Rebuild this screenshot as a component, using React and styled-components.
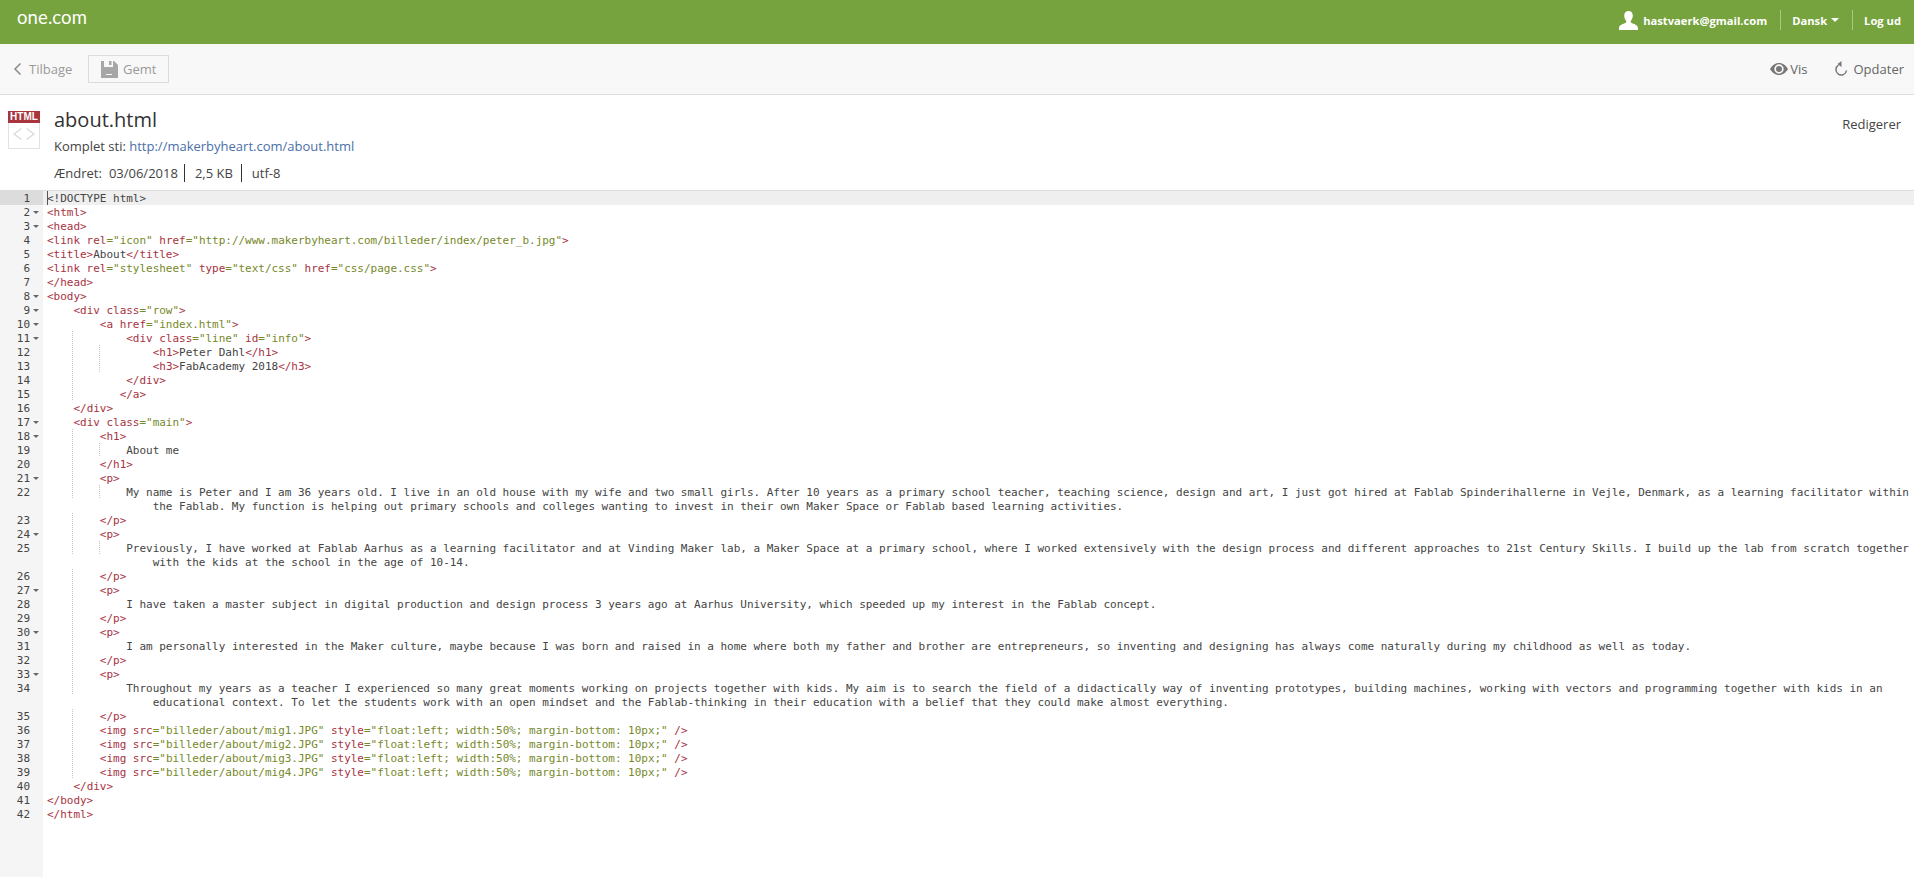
import React from "react";
import styled, { createGlobalStyle } from "styled-components";

const GlobalStyle = createGlobalStyle`
  html, body {
    margin: 0;
    padding: 0;
    height: 100%;
    overflow: hidden;
    background: #fff;
    font-family: "Open Sans", "Liberation Sans", sans-serif;
  }
`;

const TopBar = styled.header`
  height: 44px;
  background: #76a33e;
  display: flex;
  align-items: center;
  justify-content: space-between;
  padding: 0 0 0 17px;
  color: #fff;
`;

const Logo = styled.div`
  font-family: Lato, sans-serif;
  font-size: 18.5px;
  line-height: 38px;
  margin-top: -10px;
  letter-spacing: 0.1px;
`;

const UserArea = styled.div`
  display: flex;
  align-items: center;
  font-size: 11.2px;
  font-weight: 700;
  margin-top: -4px;
`;

const UserItem = styled.div`
  display: flex;
  align-items: center;
  height: 20px;
  gap: ${(p) => p.$gap || 0}px;
  padding: 0 13px 0 11px;
  border-left: ${(p) => (p.$divider ? "1px solid #a9c882" : "none")};
`;

const Caret = styled.span`
  width: 0;
  height: 0;
  margin-left: 4px;
  border-left: 4px solid transparent;
  border-right: 4px solid transparent;
  border-top: 4px solid #fff;
`;

const Toolbar = styled.div`
  height: 50px;
  background: #f8f8f8;
  border-bottom: 1px solid #dedede;
  display: flex;
  align-items: center;
  justify-content: space-between;
  padding: 0 10px 0 13px;
  font-size: 13px;
  color: #777;
`;

const ToolGroup = styled.div`
  display: flex;
  align-items: center;
  gap: ${(p) => p.$gap}px;
`;

const ToolLink = styled.span`
  display: flex;
  align-items: center;
  gap: ${(p) => p.$gap}px;
  color: ${(p) => p.$color || "#9a9a9a"};
`;

const SavedButton = styled.span`
  width: 79px;
  height: 26px;
  border: 1px solid #dcdcdc;
  display: flex;
  align-items: center;
  justify-content: center;
  gap: 5px;
  color: #9a9a9a;
`;

const FileHead = styled.div`
  height: 95px;
  display: flex;
  justify-content: space-between;
  padding: 16px 13px 0 8px;
  box-sizing: border-box;
  color: #444;
`;

const FileInfo = styled.div`
  display: flex;
  gap: 14px;
`;

const HtmlIcon = styled.div`
  width: 32px;
  height: 38px;
  border: 1px solid #e2e2e2;
  box-sizing: border-box;
  display: flex;
  flex-direction: column;
  align-items: center;
  gap: 4px;
`;

const HtmlBadge = styled.span`
  align-self: stretch;
  margin: -1px -1px 0;
  height: 12px;
  background: #a8343e;
  color: #fff;
  font-family: "Liberation Sans", sans-serif;
  font-size: 10px;
  font-weight: 700;
  line-height: 12px;
  text-align: center;
  overflow: hidden;
`;

const FileTitle = styled.h1`
  margin: -5px 0 0;
  font-size: 20px;
  font-weight: 400;
  line-height: 27px;
  color: #333;
`;

const PathLine = styled.div`
  font-size: 13px;
  line-height: 18px;
  margin-top: 4px;
`;

const PathLink = styled.a`
  color: #4a6fa8;
`;

const MetaLine = styled.div`
  display: flex;
  align-items: center;
  font-size: 13px;
  line-height: 18px;
  margin-top: 9px;
`;

const MetaLabel = styled.span`
  margin-right: 7px;
`;

const MetaItem = styled.span`
  padding: 0 ${(p) => (p.$divider ? "8px" : "6px")} 0 ${(p) => (p.$divider ? "10px" : "0")};
  border-left: ${(p) => (p.$divider ? "1px solid #333" : "none")};
`;

const EditorMode = styled.div`
  font-size: 13px;
  margin-top: 4px;
`;

const Editor = styled.div`
  border-top: 1px solid #dedede;
  display: flex;
  height: 686px;
  font-family: "DejaVu Sans Mono", monospace;
  font-size: 11px;
  line-height: 16px;
  letter-spacing: -0.02px;
`;

const Gutter = styled.div`
  width: 43px;
  flex: none;
  background: #f5f5f5;
  color: #444;
`;

const GutterCell = styled.div`
  height: ${(p) => p.$rows * 14}px;
  background: ${(p) => (p.$active ? "#dcdcdc" : "transparent")};
  padding-right: 13px;
  text-align: right;
  position: relative;
`;

const FoldMark = styled.span`
  position: absolute;
  left: 33px;
  top: 6px;
  border-left: 3px solid transparent;
  border-right: 3px solid transparent;
  border-top: 3px solid #666;
`;

const Code = styled.div`
  flex: 1;
  min-width: 0;
  padding-left: 4px;
  white-space: pre;
  color: #444;
`;

const CodeRow = styled.div`
  height: 14px;
  margin-left: ${(p) => (p.$active ? "-4px" : "0")};
  padding-left: ${(p) => (p.$active ? "4px" : "0")};
  background: ${(p) => (p.$active ? "#efefef" : "transparent")};
  position: relative;
`;

const Cursor = styled.span`
  position: absolute;
  left: 4px;
  top: 0;
  width: 1px;
  height: 14px;
  background: #555;
`;

const Guide = styled.span`
  display: inline-block;
  height: 14px;
  vertical-align: top;
  background: repeating-linear-gradient(to bottom, #c4c4c4 0 1px, transparent 1px 2px) right top / 1px 100% no-repeat;
`;

const Tag = styled.span`
  color: #a8323f;
`;

const Str = styled.span`
  color: #76892a;
`;

const Chevron = () => (
  <svg width="10" height="14" viewBox="0 0 10 14" fill="none" stroke="#8a8a8a" strokeWidth="1.5">
    <path d="M7.5 1.5 2 7l5.5 5.5" />
  </svg>
);

const SaveIcon = () => (
  <svg width="17" height="17" viewBox="0 0 17 17">
    <path fill="#a6a6a6" d="M0 0h3v6h9V0h1l4 4v13H0z" />
    <path fill="#a6a6a6" d="M8 0h2.5v4H8z" />
    <path fill="#f8f8f8" d="M5 13h6v1H5z" />
  </svg>
);

const EyeIcon = () => (
  <svg width="18" height="12" viewBox="0 0 18 12">
    <path
      fill="#777"
      fillRule="evenodd"
      d="M9 0c4 0 7 2.600 9 6-2 3.400-5 6-9 6s-7-2.600-9-6c2-3.400 5-6 9-6zm0 1.300A4.700 4.700 0 1 0 9 10.700 4.700 4.700 0 0 0 9 1.300zM9 3a3 3 0 1 1 0 6 3 3 0 0 1 0-6z"
    />
  </svg>
);

const RefreshIcon = () => (
  <svg width="14" height="16" viewBox="0 0 14 16" fill="none">
    <path stroke="#777" strokeWidth="1.5" d="M4.500 4.200A5.300 5.300 0 1 0 12.500 9.500" />
    <path fill="#777" d="M7.500 0v6L3.500 3z" />
  </svg>
);

const UserIcon = () => (
  <svg width="19" height="19" viewBox="0 0 19 19">
    <path
      fill="#fff"
      d="M9.500 0c2.700 0 4.300 2 4.300 4.800 0 2-.9 3.900-1.900 5-.4.500-.3 1.500.4 1.900 2.300 1.200 6.700 2.100 6.700 5.200V19H0v-2.100c0-3.100 4.400-4 6.700-5.200.7-.4.800-1.400.4-1.900-1-1.100-1.900-3-1.900-5C5.200 2 6.800 0 9.500 0z"
    />
  </svg>
);

const AngleIcon = () => (
  <svg width="24" height="14" viewBox="0 0 24 14" fill="none" stroke="#dcdcdc" strokeWidth="1.5">
    <path d="M9.500 1.500 2 7l7.500 5.500M14.500 1.500 22 7l-7.500 5.500" />
  </svg>
);

// text, guide count, has fold arrow, wrapped remainder
const lines = [
  ["<!DOCTYPE html>", 0, false],
  ["<html>", 0, true],
  ["<head>", 0, true],
  ['<link rel="icon" href="http://www.makerbyheart.com/billeder/index/peter_b.jpg">', 0, false],
  ["<title>About</title>", 0, false],
  ['<link rel="stylesheet" type="text/css" href="css/page.css">', 0, false],
  ["</head>", 0, false],
  ["<body>", 0, true],
  ['    <div class="row">', 0, true],
  ['        <a href="index.html">', 0, true],
  ['            <div class="line" id="info">', 1, true],
  ["                <h1>Peter Dahl</h1>", 2, false],
  ["                <h3>FabAcademy 2018</h3>", 2, false],
  ["            </div>", 1, false],
  ["           </a>", 1, false],
  ["    </div>", 0, false],
  ['    <div class="main">', 0, true],
  ["        <h1>", 1, true],
  ["            About me", 2, false],
  ["        </h1>", 1, false],
  ["        <p>", 1, true],
  [
    "            My name is Peter and I am 36 years old. I live in an old house with my wife and two small girls. After 10 years as a primary school teacher, teaching science, design and art, I just got hired at Fablab Spinderihallerne in Vejle, Denmark, as a learning facilitator within",
    2,
    false,
    "the Fablab. My function is helping out primary schools and colleges wanting to invest in their own Maker Space or Fablab based learning activities.",
  ],
  ["        </p>", 1, false],
  ["        <p>", 1, true],
  [
    "            Previously, I have worked at Fablab Aarhus as a learning facilitator and at Vinding Maker lab, a Maker Space at a primary school, where I worked extensively with the design process and different approaches to 21st Century Skills. I build up the lab from scratch together",
    2,
    false,
    "with the kids at the school in the age of 10-14.",
  ],
  ["        </p>", 1, false],
  ["        <p>", 1, true],
  [
    "            I have taken a master subject in digital production and design process 3 years ago at Aarhus University, which speeded up my interest in the Fablab concept.",
    1,
    false,
  ],
  ["        </p>", 1, false],
  ["        <p>", 1, true],
  [
    "            I am personally interested in the Maker culture, maybe because I was born and raised in a home where both my father and brother are entrepreneurs, so inventing and designing has always come naturally during my childhood as well as today.",
    1,
    false,
  ],
  ["        </p>", 1, false],
  ["        <p>", 1, true],
  [
    "            Throughout my years as a teacher I experienced so many great moments working on projects together with kids. My aim is to search the field of a didactically way of inventing prototypes, building machines, working with vectors and programming together with kids in an",
    1,
    false,
    "educational context. To let the students work with an open mindset and the Fablab-thinking in their education with a belief that they could make almost everything.",
  ],
  ["        </p>", 1, false],
  ['        <img src="billeder/about/mig1.JPG" style="float:left; width:50%; margin-bottom: 10px;" />', 1, false],
  ['        <img src="billeder/about/mig2.JPG" style="float:left; width:50%; margin-bottom: 10px;" />', 1, false],
  ['        <img src="billeder/about/mig3.JPG" style="float:left; width:50%; margin-bottom: 10px;" />', 1, false],
  ['        <img src="billeder/about/mig4.JPG" style="float:left; width:50%; margin-bottom: 10px;" />', 1, false],
  ["    </div>", 0, false],
  ["</body>", 0, false],
  ["</html>", 0, false],
];

// splits a piece of markup into tag, string and plain tokens
function highlight(text) {
  const parts = text.split(/(<[^>]*>)/).filter(Boolean);
  return parts.map((part, i) => {
    if (!part.startsWith("<")) return <span key={i}>{part}</span>;
    if (part.startsWith("<!")) return <span key={i}>{part}</span>;
    const bits = part.split(/("[^"]*"|=)/).filter(Boolean);
    return bits.map((bit, j) =>
      bit.startsWith('"') || bit === "=" ? (
        <Str key={`${i}-${j}`}>{bit}</Str>
      ) : (
        <Tag key={`${i}-${j}`}>{bit}</Tag>
      )
    );
  });
}

function CodeLine({ text, guides, active }) {
  const guideChars = guides * 4;
  return (
    <CodeRow $active={active}>
      {active && <Cursor />}
      {Array.from({ length: guides }).map((_, i) => (
        <Guide key={i}>{"    "}</Guide>
      ))}
      {highlight(text.slice(guideChars))}
    </CodeRow>
  );
}

export default function App() {
  return (
    <>
      <GlobalStyle />
      <TopBar>
        <Logo>one.com</Logo>
        <UserArea>
          <UserItem $gap={5}>
            <UserIcon />
            hastvaerk@gmail.com
          </UserItem>
          <UserItem $divider>
            Dansk
            <Caret />
          </UserItem>
          <UserItem $divider>Log ud</UserItem>
        </UserArea>
      </TopBar>
      <Toolbar>
        <ToolGroup $gap={16}>
          <ToolLink $gap={6}>
            <Chevron />
            Tilbage
          </ToolLink>
          <SavedButton>
            <SaveIcon />
            Gemt
          </SavedButton>
        </ToolGroup>
        <ToolGroup $gap={26}>
          <ToolLink $gap={2} $color="#666">
            <EyeIcon />
            Vis
          </ToolLink>
          <ToolLink $gap={6} $color="#666">
            <RefreshIcon />
            Opdater
          </ToolLink>
        </ToolGroup>
      </Toolbar>
      <FileHead>
        <FileInfo>
          <HtmlIcon>
            <HtmlBadge>HTML</HtmlBadge>
            <AngleIcon />
          </HtmlIcon>
          <div>
            <FileTitle>about.html</FileTitle>
            <PathLine>
              Komplet sti: <PathLink>http://makerbyheart.com/about.html</PathLink>
            </PathLine>
            <MetaLine>
              <MetaLabel>Ændret:</MetaLabel>
              <MetaItem>03/06/2018</MetaItem>
              <MetaItem $divider>2,5 KB</MetaItem>
              <MetaItem $divider>utf-8</MetaItem>
            </MetaLine>
          </div>
        </FileInfo>
        <EditorMode>Redigerer</EditorMode>
      </FileHead>
      <Editor>
        <Gutter>
          {lines.map(([, , fold, wrapped], i) => (
            <GutterCell key={i} $rows={wrapped ? 2 : 1} $active={i === 0}>
              {i + 1}
              {fold && <FoldMark />}
            </GutterCell>
          ))}
        </Gutter>
        <Code>
          {lines.map(([text, guides, , wrapped], i) => (
            <React.Fragment key={i}>
              <CodeLine text={text} guides={guides} active={i === 0} />
              {wrapped && <CodeRow>{"                " + wrapped}</CodeRow>}
            </React.Fragment>
          ))}
        </Code>
      </Editor>
    </>
  );
}
